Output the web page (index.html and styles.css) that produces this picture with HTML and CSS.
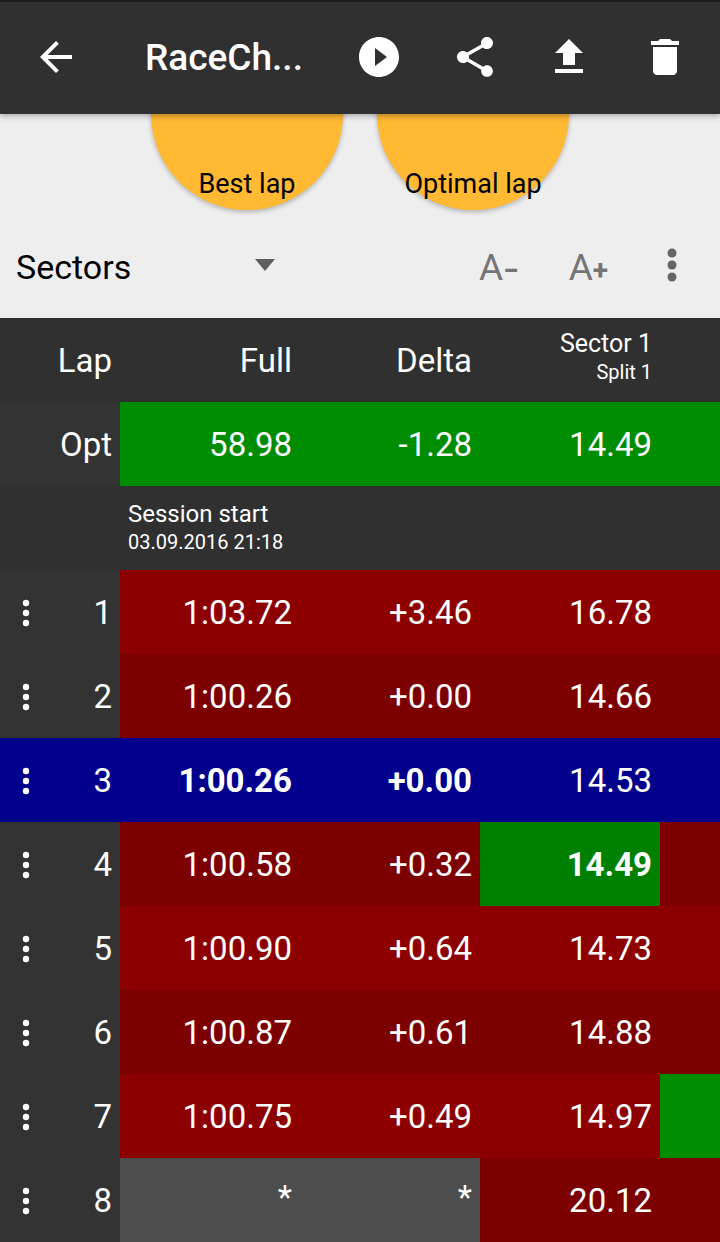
FILE: index.html
```html
<!DOCTYPE html>
<html lang="en">
<head>
<meta charset="utf-8">
<title>RaceChrono</title>
<link rel="stylesheet" href="styles.css">
</head>
<body>
<header class="toolbar">
  <svg class="tb-back" viewBox="0 0 24 24"><path d="M20 11H7.83l5.59-5.59L12 4l-8 8 8 8 1.41-1.41L7.83 13H20v-2z"/></svg>
  <div class="tb-title">RaceCh...</div>
  <svg class="tb-icon" viewBox="0 0 24 24"><path d="M12 2C6.48 2 2 6.48 2 12s4.48 10 10 10 10-4.48 10-10S17.52 2 12 2zm-2 14.5v-9l6 4.5-6 4.5z"/></svg>
  <svg class="tb-icon" viewBox="0 0 24 24"><path d="M18 16.08c-.76 0-1.44.3-1.96.77L8.91 12.7c.05-.23.09-.46.09-.7s-.04-.47-.09-.7l7.05-4.11c.54.5 1.25.81 2.04.81 1.66 0 3-1.34 3-3s-1.34-3-3-3-3 1.34-3 3c0 .24.04.47.09.7L8.04 9.81C7.5 9.31 6.79 9 6 9c-1.66 0-3 1.34-3 3s1.34 3 3 3c.79 0 1.5-.31 2.04-.81l7.12 4.16c-.05.21-.08.43-.08.65 0 1.61 1.31 2.92 2.92 2.92s2.92-1.31 2.92-2.92-1.31-2.92-2.92-2.92z"/></svg>
  <svg class="tb-icon" viewBox="0 0 24 24"><path d="M9 16h6v-6h4l-7-7-7 7h4zm-4 2h14v2H5z"/></svg>
  <svg class="tb-icon" viewBox="0 0 24 24"><path d="M6 19c0 1.1.9 2 2 2h8c1.1 0 2-.9 2-2V7H6v12zM19 4h-3.5l-1-1h-5l-1 1H5v2h14V4z"/></svg>
</header>
<section class="controls">
  <div class="fabs">
    <button class="fab">Best lap</button>
    <button class="fab">Optimal lap</button>
  </div>
  <div class="selector">
    <span class="sel-label">Sectors</span>
    <span class="sel-arrow"></span>
    <span class="font-btn font-minus">A<b>−</b></span>
    <span class="font-btn font-plus">A<b>+</b></span>
    <svg class="sel-more" viewBox="0 0 12 36"><circle cx="6" cy="6" r="4.5"/><circle cx="6" cy="18" r="4.5"/><circle cx="6" cy="30" r="4.5"/></svg>
  </div>
</section>
<main class="table">
  <div class="row head">
    <div class="lap">Lap</div><div class="cell">Full</div><div class="cell">Delta</div>
    <div class="cell stack"><span>Sector 1</span><small>Split 1</small></div><div class="tail"></div>
  </div>
  <div class="row opt">
    <div class="lap">Opt</div><div class="cell">58.98</div><div class="cell">-1.28</div><div class="cell">14.49</div><div class="tail"></div>
  </div>
  <div class="row session">
    <div class="session-text"><span>Session start</span><small>03.09.2016 21:18</small></div>
  </div>
  <div class="row red">
    <div class="lap"><svg class="dots" viewBox="0 0 8 28"><circle cx="4" cy="4" r="3.2"/><circle cx="4" cy="14" r="3.2"/><circle cx="4" cy="24" r="3.2"/></svg>1</div>
    <div class="cell">1:03.72</div><div class="cell">+3.46</div><div class="cell">16.78</div><div class="tail"></div>
  </div>
  <div class="row dark">
    <div class="lap"><svg class="dots" viewBox="0 0 8 28"><circle cx="4" cy="4" r="3.2"/><circle cx="4" cy="14" r="3.2"/><circle cx="4" cy="24" r="3.2"/></svg>2</div>
    <div class="cell">1:00.26</div><div class="cell">+0.00</div><div class="cell">14.66</div><div class="tail"></div>
  </div>
  <div class="row blue">
    <div class="lap"><svg class="dots" viewBox="0 0 8 28"><circle cx="4" cy="4" r="3.2"/><circle cx="4" cy="14" r="3.2"/><circle cx="4" cy="24" r="3.2"/></svg>3</div>
    <div class="cell best">1:00.26</div><div class="cell best">+0.00</div><div class="cell">14.53</div><div class="tail"></div>
  </div>
  <div class="row dark">
    <div class="lap"><svg class="dots" viewBox="0 0 8 28"><circle cx="4" cy="4" r="3.2"/><circle cx="4" cy="14" r="3.2"/><circle cx="4" cy="24" r="3.2"/></svg>4</div>
    <div class="cell">1:00.58</div><div class="cell">+0.32</div><div class="cell best green">14.49</div><div class="tail"></div>
  </div>
  <div class="row red">
    <div class="lap"><svg class="dots" viewBox="0 0 8 28"><circle cx="4" cy="4" r="3.2"/><circle cx="4" cy="14" r="3.2"/><circle cx="4" cy="24" r="3.2"/></svg>5</div>
    <div class="cell">1:00.90</div><div class="cell">+0.64</div><div class="cell">14.73</div><div class="tail"></div>
  </div>
  <div class="row dark">
    <div class="lap"><svg class="dots" viewBox="0 0 8 28"><circle cx="4" cy="4" r="3.2"/><circle cx="4" cy="14" r="3.2"/><circle cx="4" cy="24" r="3.2"/></svg>6</div>
    <div class="cell">1:00.87</div><div class="cell">+0.61</div><div class="cell">14.88</div><div class="tail"></div>
  </div>
  <div class="row red">
    <div class="lap"><svg class="dots" viewBox="0 0 8 28"><circle cx="4" cy="4" r="3.2"/><circle cx="4" cy="14" r="3.2"/><circle cx="4" cy="24" r="3.2"/></svg>7</div>
    <div class="cell">1:00.75</div><div class="cell">+0.49</div><div class="cell">14.97</div><div class="tail green"></div>
  </div>
  <div class="row dark">
    <div class="lap"><svg class="dots" viewBox="0 0 8 28"><circle cx="4" cy="4" r="3.2"/><circle cx="4" cy="14" r="3.2"/><circle cx="4" cy="24" r="3.2"/></svg>8</div>
    <div class="cell grey star">*</div><div class="cell grey star">*</div><div class="cell">20.12</div><div class="tail"></div>
  </div>
</main>
</body>
</html>
```
FILE: styles.css
```css
* { box-sizing: border-box; }
html, body { margin: 0; padding: 0; }
body {
  width: 720px;
  height: 1242px;
  overflow: hidden;
  background: #eeeeee;
  font-family: Roboto, "Liberation Sans", sans-serif;
}
.toolbar {
  position: relative;
  z-index: 2;
  height: 114px;
  background: #303030;
  border-top: 2px solid #1c1c1c;
  display: flex;
  align-items: center;
  box-shadow: 0 2px 6px rgba(0,0,0,.3);
  padding-bottom: 2px;
  fill: #fff;
  color: #fff;
}
.tb-back { width: 48px; height: 48px; margin-left: 32px; flex: none; }
.tb-title { font-size: 37px; font-weight: 500; margin-left: 65px; width: 174px; flex: none; white-space: nowrap; }
.tb-icon { width: 48px; height: 48px; flex: none; margin-right: 48px; }
.tb-title + .tb-icon { margin-left: 36px; }
.tb-icon:nth-of-type(3) { margin-right: 46px; }
.controls { height: 204px; display: flex; flex-direction: column; }
.fabs { height: 96px; display: flex; gap: 34px; padding-left: 151px; overflow: hidden; padding-bottom: 6px; box-sizing: content-box; }
.fab {
  width: 192px; height: 192px; margin-top: -96px; flex: none;
  border: 0; border-radius: 50%;
  background: #ffb932;
  box-shadow: 0 2px 5px rgba(0,0,0,.25);
  color: #000;
  font: 400 27px Roboto, sans-serif;
  padding: 140px 0 0;
  line-height: 32px;
}
.selector { flex: 1; display: flex; align-items: center; padding-left: 16px; }
.sel-label { font-size: 34px; color: #000; width: 239px; }
.sel-arrow { width: 0; height: 0; border-left: 10px solid transparent; border-right: 10px solid transparent; border-top: 12px solid #5f5f5f; margin-top: -4px; }
.font-btn { font-size: 37px; color: #757575; }
.font-btn b { font-weight: 700; font-size: 28px; }
.font-minus { margin-left: 204px; }
.font-plus { margin-left: 50px; }
.sel-more { width: 12px; height: 36px; margin-left: 58px; fill: #666; margin-top: -4px; }
.table { background: #303030; color: #fff; }
.row { height: 84px; display: grid; grid-template-columns: 120px 180px 180px 180px 60px; font-size: 33px; }
.lap { background: #333; display: flex; align-items: center; justify-content: flex-end; padding-right: 8px; position: relative; }
.cell { display: flex; align-items: center; justify-content: flex-end; padding-right: 8px; }
.head, .head .lap { background: #303030; }
.stack { flex-direction: column; align-items: flex-end; justify-content: center; font-size: 25px; line-height: 28px; padding-bottom: 4px; }
.stack small { font-size: 20px; line-height: 28px; }
.opt { background: #008c00; }
.session { display: block; padding: 14px 0 0 128px; background: #303030; }
.session-text { display: flex; flex-direction: column; font-size: 24px; line-height: 28px; }
.session-text small { font-size: 20px; line-height: 28px; }
.red { background: #8c0000; }
.dark { background: #7d0000; }
.blue, .blue .lap { background: #00008c; }
.green { background: #008000; }
.row.red .tail.green { background: #008c00; }
.grey { background: #4d4d4d; }
.best { font-weight: 700; }
.star { align-items: flex-start; padding-top: 20px; }
.dots { position: absolute; left: 22px; top: 29px; width: 8px; height: 28px; fill: #fff; }
```
